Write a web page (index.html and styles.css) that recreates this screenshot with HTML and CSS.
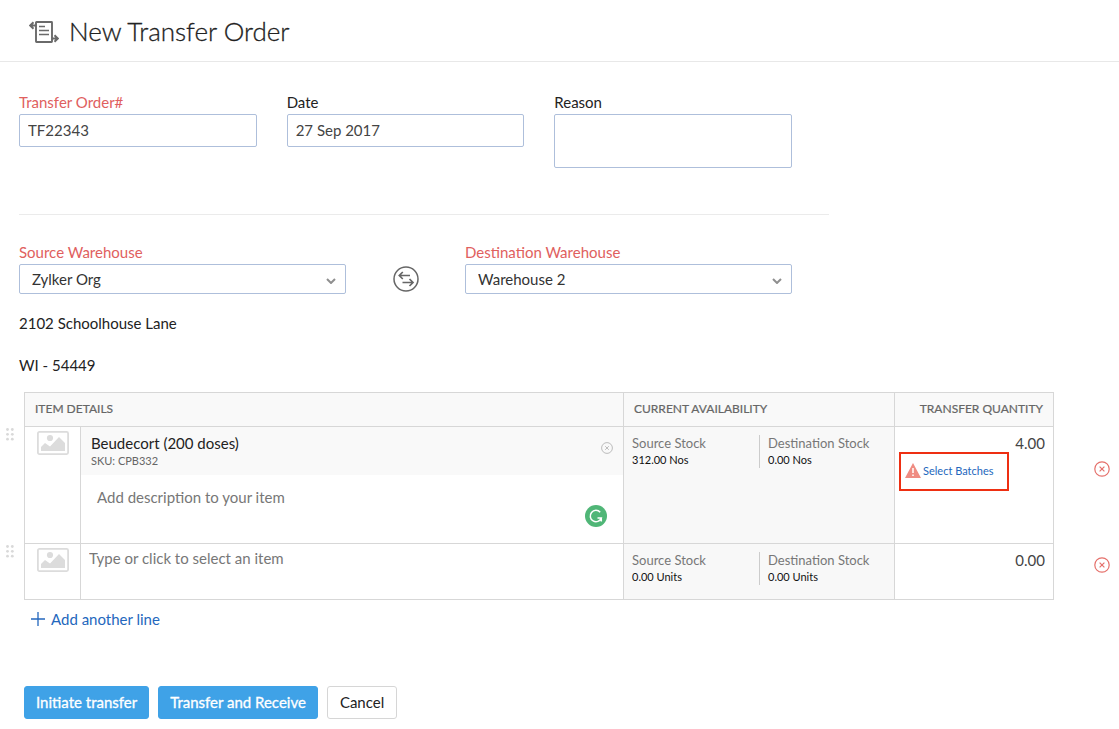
FILE: index.html
```html
<!DOCTYPE html>
<html lang="en">
<head>
<meta charset="utf-8">
<meta name="viewport" content="width=device-width, initial-scale=1">
<title>New Transfer Order</title>
<link rel="stylesheet" href="styles.css">
</head>
<body>
<svg class="sprite" aria-hidden="true">
  <symbol id="i-grip" viewBox="0 0 8 13">
    <g fill="#d9d9d9"><circle cx="1.500" cy="1.500" r="1.400"/><circle cx="6.300" cy="1.500" r="1.400"/><circle cx="1.500" cy="6.300" r="1.400"/><circle cx="6.300" cy="6.300" r="1.400"/><circle cx="1.500" cy="11.200" r="1.400"/><circle cx="6.300" cy="11.200" r="1.400"/></g>
  </symbol>
  <symbol id="i-image" viewBox="0 0 32 24">
    <rect x="0.9" y="0.9" width="30.2" height="22.2" rx="1.5" fill="#fff" stroke="#dcdcdc" stroke-width="1.8"/>
    <circle cx="13" cy="7" r="3.1" fill="#dcdcdc"/>
    <path d="M4 20v-4l4-4 5 3.500L22 6l6 6V20z" fill="#dcdcdc"/>
  </symbol>
  <symbol id="i-close" viewBox="0 0 16 16">
    <circle cx="8" cy="8" r="7.200" fill="none" stroke="currentColor" stroke-width="1.200"/>
    <path d="M5.600 5.600l4.800 4.800M10.400 5.600l-4.800 4.800" fill="none" stroke="currentColor" stroke-width="1.200"/>
  </symbol>
</svg>

<header class="page-header">
  <svg class="title-icon" viewBox="0 0 30 24" fill="none" stroke="#6a6a6a" aria-hidden="true">
    <rect x="7" y="2" width="16" height="20" rx="0.500" stroke-width="1.900"/>
    <path d="M10 6.500h6M10 10.500h10M10 14.500h10" stroke-width="1.700"/>
    <path d="M7 5.500H1.500M4.500 2.300L1.200 5.500l3.300 3.200M23 18.500h5.500M25.500 15.300l3.300 3.200-3.300 3.200" stroke-width="1.900"/>
  </svg>
  <h1>New Transfer Order</h1>
</header>

<main>
  <section class="form order-fields">
    <div class="field">
      <label class="required" for="order-no">Transfer Order#</label>
      <input class="box" id="order-no" type="text" value="TF22343">
    </div>
    <div class="field">
      <label for="date">Date</label>
      <input class="box" id="date" type="text" value="27 Sep 2017">
    </div>
    <div class="field">
      <label for="reason">Reason</label>
      <textarea class="box reason" id="reason"></textarea>
    </div>
  </section>

  <section class="form warehouses">
    <div class="field">
      <label class="required" for="source">Source Warehouse</label>
      <div class="select-wrap">
        <select class="box" id="source"><option>Zylker Org</option></select>
        <svg class="chevron" viewBox="0 0 10 6" aria-hidden="true"><path d="M1 1l4 4 4-4"/></svg>
      </div>
    </div>
    <button class="swap" type="button" aria-label="Swap warehouses">
      <svg viewBox="0 0 26 26" fill="none" stroke="#666" aria-hidden="true">
        <circle cx="13" cy="13" r="12" stroke-width="1.500"/>
        <path d="M17 9.500H6.500M9.800 6L6.300 9.500l3.500 3.500M9.500 16.500H20M16.500 13l3.500 3.500-3.500 3.500" stroke-width="1.700"/>
      </svg>
    </button>
    <div class="field">
      <label class="required" for="destination">Destination Warehouse</label>
      <div class="select-wrap">
        <select class="box" id="destination"><option>Warehouse 2</option></select>
        <svg class="chevron" viewBox="0 0 10 6" aria-hidden="true"><path d="M1 1l4 4 4-4"/></svg>
      </div>
    </div>
  </section>

  <address class="address"><span>2102 Schoolhouse Lane</span><span>WI - 54449</span></address>

  <table class="items">
    <colgroup><col class="c-grip"><col class="c-thumb"><col><col class="c-stock"><col class="c-qty"><col class="c-remove"></colgroup>
    <thead>
      <tr>
        <td></td>
        <th class="cell" colspan="2" scope="col">ITEM DETAILS</th>
        <th class="cell" scope="col">CURRENT AVAILABILITY</th>
        <th class="cell last right" scope="col">TRANSFER QUANTITY</th>
        <td></td>
      </tr>
    </thead>
    <tbody>
      <tr class="row-filled">
        <td class="grip"><svg><use href="#i-grip"/></svg></td>
        <td class="cell thumb"><svg><use href="#i-image"/></svg></td>
        <td class="cell details">
          <div class="item-head">
            <div>
              <div class="item-name">Beudecort (200 doses)</div>
              <div class="sku">SKU: CPB332</div>
            </div>
            <button class="clear" type="button" aria-label="Clear item"><svg><use href="#i-close"/></svg></button>
          </div>
          <div class="description">
            <textarea placeholder="Add description to your item" aria-label="Description"></textarea>
            <svg class="checker" viewBox="0 0 22 22" aria-hidden="true">
              <circle cx="11" cy="11" r="11" fill="#50b677"/>
              <path d="M15.200 7.200A5.700 5.700 0 1 0 16.300 13H12.500M16.300 12.300v4.200" fill="none" stroke="#fff" stroke-width="1.500"/>
            </svg>
          </div>
        </td>
        <td class="cell stock">
          <dl>
            <div><dt>Source Stock</dt><dd>312.00 Nos</dd></div>
            <div><dt>Destination Stock</dt><dd>0.00 Nos</dd></div>
          </dl>
        </td>
        <td class="cell last qty">
          <input type="text" value="4.00" aria-label="Transfer quantity, line 1">
          <div class="batches">
            <svg viewBox="0 0 16 15" aria-hidden="true"><path d="M8 0l8 15H0z" fill="#ef8c82"/><path d="M8 5v5M8 11.500v1.500" stroke="#fff" stroke-width="1.500"/></svg>
            <a href="#">Select Batches</a>
          </div>
        </td>
        <td class="remove"><button type="button" aria-label="Remove line 1"><svg><use href="#i-close"/></svg></button></td>
      </tr>
      <tr class="row-empty">
        <td class="grip"><svg><use href="#i-grip"/></svg></td>
        <td class="cell thumb"><svg><use href="#i-image"/></svg></td>
        <td class="cell details"><input class="item-search" type="text" placeholder="Type or click to select an item" aria-label="Item"></td>
        <td class="cell stock">
          <dl>
            <div><dt>Source Stock</dt><dd>0.00 Units</dd></div>
            <div><dt>Destination Stock</dt><dd>0.00 Units</dd></div>
          </dl>
        </td>
        <td class="cell last qty"><input type="text" value="0.00" aria-label="Transfer quantity, line 2"></td>
        <td class="remove"><button type="button" aria-label="Remove line 2"><svg><use href="#i-close"/></svg></button></td>
      </tr>
    </tbody>
  </table>

  <a class="add-line" href="#"><svg viewBox="0 0 14 14" aria-hidden="true"><path d="M7 0v14M0 7h14"/></svg>Add another line</a>

  <div class="actions">
    <button class="btn primary" type="submit">Initiate transfer</button>
    <button class="btn primary" type="submit">Transfer and Receive</button>
    <button class="btn" type="button">Cancel</button>
  </div>
</main>
</body>
</html>
```

FILE: styles.css
```css
* {
  box-sizing: border-box;
}

body {
  margin: 0;
  background: #fff;
  color: #222;
  font-family: Lato, "Open Sans", sans-serif;
  font-size: 15px;
  line-height: 18px;
}

input,
select,
textarea,
button {
  margin: 0;
  font: inherit;
  color: inherit;
}

button {
  padding: 0;
  border: 0;
  background: none;
  cursor: pointer;
}

svg {
  display: block;
  flex: none;
}

a {
  color: #2467bd;
  text-decoration: none;
}

.sprite {
  display: none;
}

/* Title bar */
.page-header {
  display: flex;
  align-items: center;
  gap: 10px;
  height: 62px;
  padding: 2px 29px 0;
  border-bottom: 1px solid #e8e8e8;
}

.title-icon {
  width: 30px;
  height: 24px;
}

h1 {
  margin: 0;
  padding-bottom: 2px;
  font-size: 26px;
  font-weight: 300;
  line-height: 32px;
  -webkit-text-stroke: 0.3px;
}

/* Form fields */
.form {
  display: grid;
  max-width: 810px;
  margin-left: 19px;
  padding-right: 37px;
}

.order-fields {
  grid-template-columns: repeat(3, 1fr);
  gap: 30px;
  padding-top: 31px;
  padding-bottom: 46px;
  border-bottom: 1px solid #ebebeb;
}

.warehouses {
  grid-template-columns: 1fr 119px 1fr;
  padding-top: 28px;
}

.field label {
  display: block;
  height: 21px;
}

.required {
  color: #e0605e;
}

.box {
  display: block;
  width: 100%;
  height: 33px;
  padding: 0 8px 1px;
  border: 1px solid #aebfdb;
  border-radius: 2px;
  background: #fff;
  color: #444;
  outline: 0;
}

.reason {
  height: 54px;
  padding: 6px 8px;
  resize: none;
}

.select-wrap {
  position: relative;
}

select.box {
  height: 30px;
  padding: 0 30px 0 12px;
  appearance: none;
  color: #333;
}

.chevron {
  position: absolute;
  right: 10px;
  top: 14px;
  width: 10px;
  height: 6px;
  fill: none;
  stroke: #8f8f8f;
  stroke-width: 2;
  pointer-events: none;
}

.swap {
  align-self: end;
  justify-self: center;
  padding-bottom: 2px;
}

.swap svg {
  width: 26px;
  height: 26px;
}

.address {
  display: grid;
  gap: 24px;
  margin: 20px 19px 18px;
  font-style: normal;
}

/* Line items */
.items {
  width: 100%;
  table-layout: fixed;
  border-collapse: separate;
  border-spacing: 0;
}

.items td,
.items th {
  padding: 0;
  vertical-align: top;
}

.c-grip { width: 24px; }
.c-thumb { width: 56px; }
.c-stock { width: 271px; }
.c-qty { width: 160px; }
.c-remove { width: 65px; }

.items .cell {
  border: 0 solid #d7d7d7;
  border-width: 1px 0 0 1px;
}

.items .last {
  border-right-width: 1px;
}

.row-empty .cell {
  border-bottom-width: 1px;
}

.items th {
  height: 34px;
  padding: 0 10px 2px;
  background: #f9f9f9;
  color: #666;
  font-size: 12px;
  font-weight: 400;
  text-align: left;
  vertical-align: middle;
  -webkit-text-stroke: 0.2px;
}

.items .right {
  text-align: right;
}

.row-filled {
  height: 117px;
}

.row-empty {
  height: 57px;
}

.grip svg {
  width: 8px;
  height: 13px;
  margin: 2px 0 0 6px;
}

.thumb svg {
  width: 32px;
  height: 24px;
  margin: 4px 0 0 12px;
}

.items .grip {
  cursor: move;
}

.item-head {
  display: flex;
  justify-content: space-between;
  align-items: flex-start;
  height: 48px;
  padding: 7px 10px;
  background: #f9f9f9;
}

.sku {
  color: #666;
  font-size: 11px;
}

.clear {
  padding-top: 8px;
  color: #b5b5b5;
}

.clear svg {
  width: 12px;
  height: 12px;
}

.description {
  position: relative;
}

.description textarea {
  display: block;
  width: 100%;
  height: 68px;
  padding: 13px 16px;
  border: 0;
  outline: 0;
  background: none;
  resize: none;
}

::placeholder {
  color: #777;
  opacity: 1;
}

.checker {
  position: absolute;
  right: 16px;
  bottom: 16px;
  width: 22px;
  height: 22px;
}

.item-search {
  width: 100%;
  height: 30px;
  padding: 0 8px 2px;
  border: 0;
  outline: 0;
  background: none;
}

.items .stock {
  background: #f8f8f8;
}

.stock dl {
  display: grid;
  grid-template-columns: 127px 1fr;
  margin: 8px 0 0 8px;
}

.stock dl div + div {
  padding-left: 8px;
  border-left: 1px solid #ccc;
}

.stock dt {
  color: #777;
  font-size: 13px;
  line-height: 17px;
}

.stock dd {
  margin: 0;
  color: #111;
  font-size: 11px;
  line-height: 16px;
}

.qty input {
  display: block;
  width: 100%;
  height: 25px;
  padding: 7px 8px 0;
  border: 0;
  outline: 0;
  background: none;
  color: #444;
  text-align: right;
}

.batches {
  display: flex;
  align-items: center;
  gap: 2px;
  width: 110px;
  height: 39px;
  margin-left: 4px;
  padding: 0 0 2px 4px;
  border: 2px solid #ee2f12;
  font-size: 11px;
}

.batches svg {
  width: 16px;
  height: 15px;
}

.remove button {
  display: block;
  margin: 14px 0 0 40px;
  color: #e5706b;
}

.row-filled .remove button {
  margin-top: 35px;
}

.remove svg {
  width: 16px;
  height: 16px;
}

.add-line {
  display: flex;
  align-items: center;
  gap: 6px;
  width: fit-content;
  margin: 10px 0 0 31px;
}

.add-line svg {
  width: 14px;
  height: 14px;
  stroke: #2467bd;
  stroke-width: 1.3;
}

/* Footer actions */
.actions {
  display: flex;
  gap: 9px;
  padding: 58px 24px 10px;
}

.btn {
  height: 33px;
  padding: 0 12px 2px;
  border: 1px solid #d6d6d6;
  border-radius: 3px;
  background: #fff;
  color: #222;
}

.primary {
  padding: 0 11px 2px;
  border-color: #3fa2e7;
  background: #3fa2e7;
  color: #fff;
  -webkit-text-stroke: 0.3px;
}
```
